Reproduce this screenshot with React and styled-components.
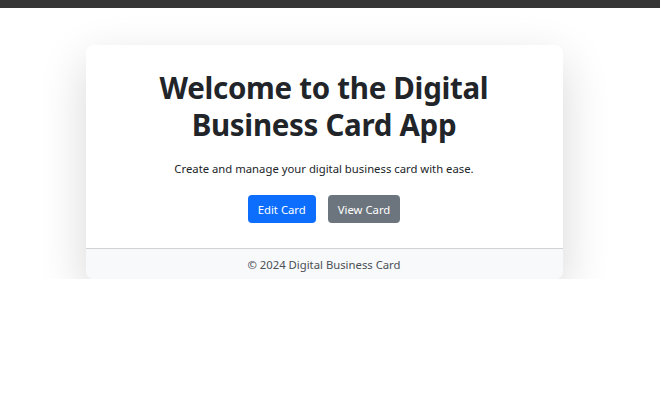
import React from 'react'
import styled, { createGlobalStyle } from 'styled-components'

const GlobalStyle = createGlobalStyle`
  body {
    margin: 0;
    background: #fff;
    font-family: "Noto Sans", "Open Sans", sans-serif;
    color: #212529;
  }
`

const TopBar = styled.div`
  height: 8px;
  background: #363636;
`

const Page = styled.main`
  display: flex;
  justify-content: center;
  padding: 37px 12px 0 0;
`

const Card = styled.section`
  width: 477px;
  background: #fff;
  border-radius: 8px;
  overflow: hidden;
  box-shadow: 0 16px 48px rgba(0, 0, 0, 0.16);
  display: flex;
  flex-direction: column;
`

const CardBody = styled.div`
  display: flex;
  flex-direction: column;
  align-items: center;
  text-align: center;
  padding: 24px 40px 25px;
`

const Title = styled.h1`
  margin: 0 0 16px;
  font-size: 29.5px;
  line-height: 37px;
  letter-spacing: -0.3px;
  font-weight: 700;
  color: #212529;
`

const Lead = styled.p`
  margin: 0 0 16px;
  font-size: 11.3px;
  line-height: 20px;
`

const Actions = styled.div`
  display: flex;
  gap: 12px;
`

const Button = styled.button`
  height: 28px;
  padding: 0 10px;
  border: none;
  border-radius: 4px;
  font-family: inherit;
  font-size: 11.3px;
  color: #fff;
  background: ${({ variant }) => (variant === 'secondary' ? '#6c757d' : '#0d6efd')};
  cursor: pointer;
`

const Footer = styled.footer`
  border-top: 1px solid #d0d2d4;
  background: #f8f9fa;
  height: 30px;
  display: flex;
  align-items: center;
  justify-content: center;
  font-size: 11.3px;
  color: #495057;
`

export default function App() {
  return (
    <>
      <GlobalStyle />
      <TopBar />
      <Page>
        <Card>
          <CardBody>
            <Title>
              Welcome to the Digital
              <br />
              Business Card App
            </Title>
            <Lead>Create and manage your digital business card with ease.</Lead>
            <Actions>
              <Button>Edit Card</Button>
              <Button variant='secondary'>View Card</Button>
            </Actions>
          </CardBody>
          <Footer>&copy; 2024 Digital Business Card</Footer>
        </Card>
      </Page>
    </>
  )
}
